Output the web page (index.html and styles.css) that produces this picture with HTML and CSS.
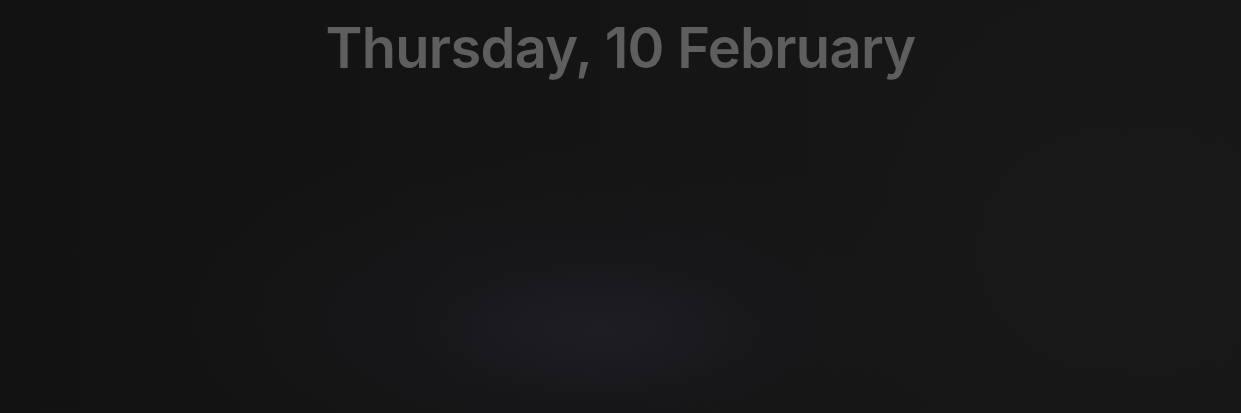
FILE: index.html
```html
<!DOCTYPE html>
<html lang="en">
<head>
<meta charset="utf-8">
<title>Lock screen</title>
<link rel="stylesheet" href="styles.css">
</head>
<body>
<main class="screen">
  <h1 class="date">Thursday, 10 February</h1>
</main>
</body>
</html>
```
FILE: styles.css
```css
html, body {
  margin: 0;
  padding: 0;
  height: 100%;
  background: #151515;
}
.screen {
  height: 413px;
  width: 1241px;
  overflow: hidden;
  display: flex;
  flex-direction: column;
  align-items: center;
  background:
    radial-gradient(ellipse 170px 70px at 600px 330px, rgba(32, 30, 38, 0.85), rgba(32, 30, 38, 0) 100%),
    radial-gradient(ellipse 420px 180px at 560px 320px, rgba(26, 25, 30, 0.8), rgba(26, 25, 30, 0) 100%),
    radial-gradient(ellipse 300px 300px at 1100px 250px, rgba(26, 26, 26, 0.7), rgba(26, 26, 26, 0) 100%),
    linear-gradient(90deg, #121212 0%, #141414 40%, #161616 70%, #171717 100%);
}
.date {
  margin: 14px 0 0;
  font-family: "Inter", "Liberation Sans", sans-serif;
  font-weight: 600;
  font-size: 56px;
  line-height: 68px;
  letter-spacing: -0.7px;
  color: #5e5e5e;
}
```
